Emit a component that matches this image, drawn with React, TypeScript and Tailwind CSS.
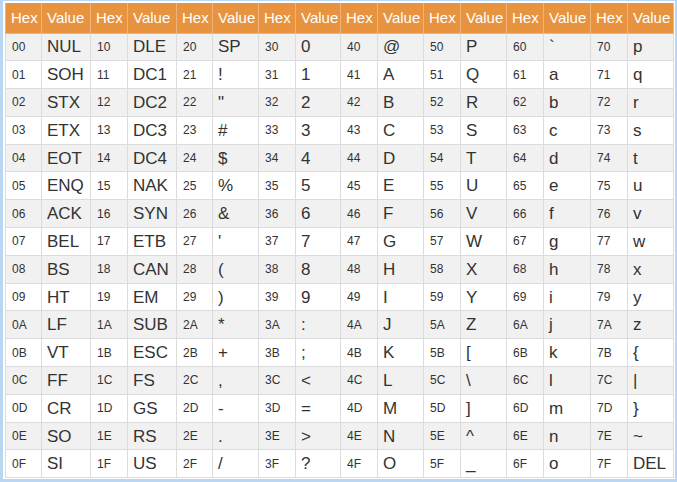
import React from "react";

const ctrl = [
  "NUL","SOH","STX","ETX","EOT","ENQ","ACK","BEL","BS","HT","LF","VT","FF","CR","SO","SI",
  "DLE","DC1","DC2","DC3","DC4","NAK","SYN","ETB","CAN","EM","SUB","ESC","FS","GS","RS","US",
];

function val(code: number): string {
  if (code < 32) return ctrl[code];
  if (code === 32) return "SP";
  if (code === 127) return "DEL";
  return String.fromCharCode(code);
}

const widths = [36, 49, 37, 49, 36, 46, 37, 45, 37, 46, 37, 46, 37, 47, 37, 46];

export default function App() {
  const rows = Array.from({ length: 16 }, (_, r) => r);
  const cols = Array.from({ length: 8 }, (_, c) => c);
  return (
    <div className="w-[677px] h-[482px] bg-white" style={{ fontFamily: '"Liberation Sans", Arial, sans-serif' }}>
      <div className="w-[677px] h-[482px] border-l-[3px] border-t border-r-[2px] border-b-[3px] border-[#b9d6f3] pl-[2px] pt-[2px] pr-[1px] pb-[1px]">
        <table className="border-collapse table-fixed w-[668px] text-[#333]">
          <colgroup>
            {widths.map((w, i) => (
              <col key={i} style={{ width: w }} />
            ))}
          </colgroup>
          <thead>
            <tr className="bg-[#e8933f] h-[30px]">
              {cols.map((c) => (
                <React.Fragment key={c}>
                  <th className="text-left font-normal text-white text-[15px] pl-[5px] border border-[#f0b47a] border-t-0 p-0">Hex</th>
                  <th className="text-left font-normal text-white text-[15px] pl-[5px] border border-[#f0b47a] border-t-0 p-0">Value</th>
                </React.Fragment>
              ))}
            </tr>
          </thead>
          <tbody>
            {rows.map((r) => (
              <tr key={r} className={(r % 2 === 0 ? "bg-[#f1f1f1]" : "bg-white") + " h-[27.8px]"}>
                {cols.map((c) => {
                  const code = c * 16 + r;
                  const hex = code.toString(16).toUpperCase().padStart(2, "0");
                  return (
                    <React.Fragment key={c}>
                      <td className="text-[12px] pl-[6px] p-0 border border-[#dcdcdc] leading-none">{hex}</td>
                      <td className="text-[17px] pl-[5px] p-0 border border-[#dcdcdc] leading-none">{val(code)}</td>
                    </React.Fragment>
                  );
                })}
              </tr>
            ))}
          </tbody>
        </table>
      </div>
    </div>
  );
}
